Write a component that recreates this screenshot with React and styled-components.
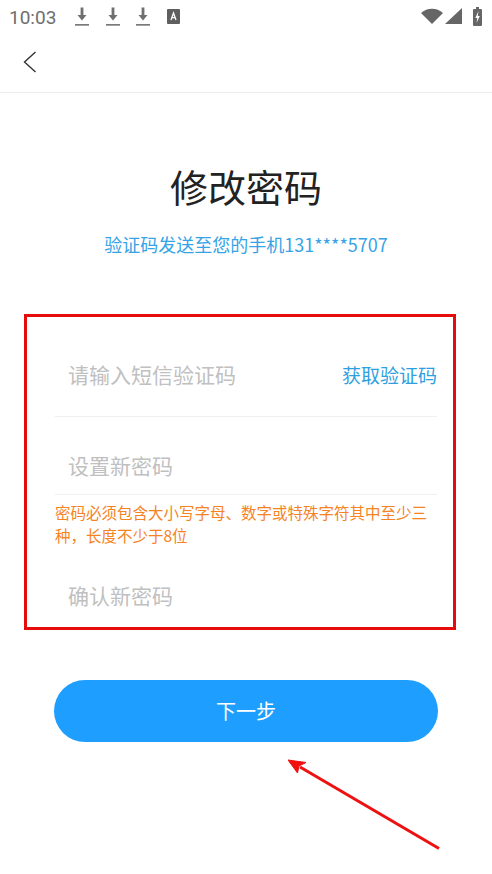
import React from 'react'
import styled, { createGlobalStyle } from 'styled-components'

const FONT = `"Noto Sans CJK SC", "Roboto", sans-serif`

const DownloadIcon = () => (
  <StatusSvg width="14" height="19" viewBox="0 0 14 19">
    <path d="M5.6 0.5h2.800v7.500h3.100L7 13.500 2.500 8h3.100z" fill="#6f6f6f" />
    <rect x="0" y="17" width="14" height="1.700" fill="#7a7a7a" />
  </StatusSvg>
)

const App = () => {
  return (
    <Page>
      <GlobalStyle />
      <StatusBar>
        <Time>10:03</Time>
        <Notifications>
          <DownloadIcon />
          <DownloadIcon />
          <DownloadIcon />
          <StatusSvg width="13" height="15" viewBox="0 0 13 15">
            <rect width="13" height="15" rx="1" fill="#5f5f5f" />
            <path d="M4 11 6.500 4 9 11M4.900 8.700h3.200" fill="none" stroke="#fff" strokeWidth="1.300" />
          </StatusSvg>
        </Notifications>
        <SystemIcons>
          <StatusSvg width="22" height="16" viewBox="0 0 22 16">
            <path d="M0 5C6-0.700 16-0.700 22 5L11 16z" fill="#666" />
          </StatusSvg>
          <StatusSvg width="17" height="16" viewBox="0 0 17 16">
            <path d="M17 0v16H0z" fill="#666" />
          </StatusSvg>
          <BatterySvg width="9" height="19" viewBox="0 0 9 19">
            <path d="M3 0h3v2h2a1 1 0 0 1 1 1v15a1 1 0 0 1-1 1H1a1 1 0 0 1-1-1V3a1 1 0 0 1 1-1h2z" fill="#666" />
            <path d="M5.500 4 2.300 11h2L3.500 16 6.800 9h-2z" fill="#fff" />
          </BatterySvg>
        </SystemIcons>
      </StatusBar>

      <NavBar>
        <BackIcon width="14" height="22" viewBox="0 0 14 22">
          <path d="M12.500 1 1.500 11l11 10" fill="none" stroke="#333" strokeWidth="1.400" />
        </BackIcon>
      </NavBar>

      <Title>修改密码</Title>
      <Subtitle>验证码发送至您的手机131****5707</Subtitle>

      <HighlightBox>
        <CodeRow>
          <Placeholder>请输入短信验证码</Placeholder>
          <GetCode>获取验证码</GetCode>
        </CodeRow>
        <PasswordRow>
          <Placeholder>设置新密码</Placeholder>
        </PasswordRow>
        <Hint>密码必须包含大小写字母、数字或特殊字符其中至少三种，长度不少于8位</Hint>
        <ConfirmRow>
          <Placeholder>确认新密码</Placeholder>
        </ConfirmRow>
      </HighlightBox>

      <NextButton>下一步</NextButton>

      <ArrowMark width="160" height="96" viewBox="0 0 160 96">
        <path d="M151 89.500 12 8" fill="none" stroke="#ee1111" strokeWidth="3" />
        <path d="M0 1 18 3.500 11 7 9.500 14z" fill="#f01010" stroke="#f01010" strokeWidth="1" />
      </ArrowMark>
    </Page>
  )
}

export default App

const GlobalStyle = createGlobalStyle`
  html, body {
    margin: 0;
    padding: 0;
    background: #fff;
  }
`

const Page = styled.div`
  position: relative;
  width: 492px;
  height: 874px;
  overflow: hidden;
  background: #fff;
  font-family: ${FONT};
`

const StatusBar = styled.div`
  display: flex;
  align-items: center;
  height: 32px;
  padding: 0 10px 0 9px;
`

const Time = styled.span`
  font-family: Roboto, sans-serif;
  font-size: 19px;
  color: #6e6e6e;
  width: 66px;
  padding-top: 2px;
`

const Notifications = styled.div`
  display: flex;
  align-items: center;
  gap: 16.500px;
`

const SystemIcons = styled.div`
  display: flex;
  align-items: center;
  gap: 2px;
  margin-left: auto;
`

const StatusSvg = styled.svg`
  display: block;
`

const BatterySvg = styled(StatusSvg)`
  margin-left: 9px;
`

const NavBar = styled.div`
  display: flex;
  align-items: center;
  height: 60px;
  padding-left: 23px;
  border-bottom: 1px solid #ececec;
`

const BackIcon = styled.svg`
  display: block;
`

const Title = styled.h1`
  margin: 64px 0 0;
  font-size: 38px;
  font-weight: 400;
  line-height: 58px;
  color: #222;
  text-align: center;
`

const Subtitle = styled.p`
  margin: 14px 0 0;
  font-size: 18px;
  line-height: 30px;
  color: #36a3e6;
  text-align: center;
`

const HighlightBox = styled.div`
  box-sizing: border-box;
  width: 432px;
  height: 316px;
  margin: 55px 0 0 24px;
  padding: 0 16px 0 28px;
  border: 3px solid #e60c0c;
`

const Row = styled.div`
  display: flex;
  align-items: center;
  justify-content: space-between;
  padding-left: 13px;
`

const CodeRow = styled(Row)`
  height: 100px;
  padding-top: 14px;
  box-sizing: border-box;
  border-bottom: 1px solid #f0f0f0;
`

const PasswordRow = styled(Row)`
  height: 78px;
  padding-top: 18px;
  box-sizing: border-box;
  border-bottom: 1px solid #f0f0f0;
`

const ConfirmRow = styled(Row)`
  height: 50px;
  margin-top: 23px;
`

const Placeholder = styled.span`
  font-size: 21px;
  color: #c0c0c0;
`

const GetCode = styled.span`
  padding-top: 2px;
  font-size: 19px;
  color: #2f9fe0;
`

const Hint = styled.p`
  margin: 6px 0 0;
  font-size: 15.500px;
  line-height: 23px;
  color: #f5831f;
`

const NextButton = styled.button`
  display: block;
  width: 384px;
  height: 62px;
  margin: 50px 0 0 54px;
  padding: 0 0 2px;
  border: none;
  border-radius: 31px;
  background: #1e9fff;
  color: #fff;
  font-family: ${FONT};
  font-size: 20px;
`

const ArrowMark = styled.svg`
  position: absolute;
  left: 288px;
  top: 759px;
`
